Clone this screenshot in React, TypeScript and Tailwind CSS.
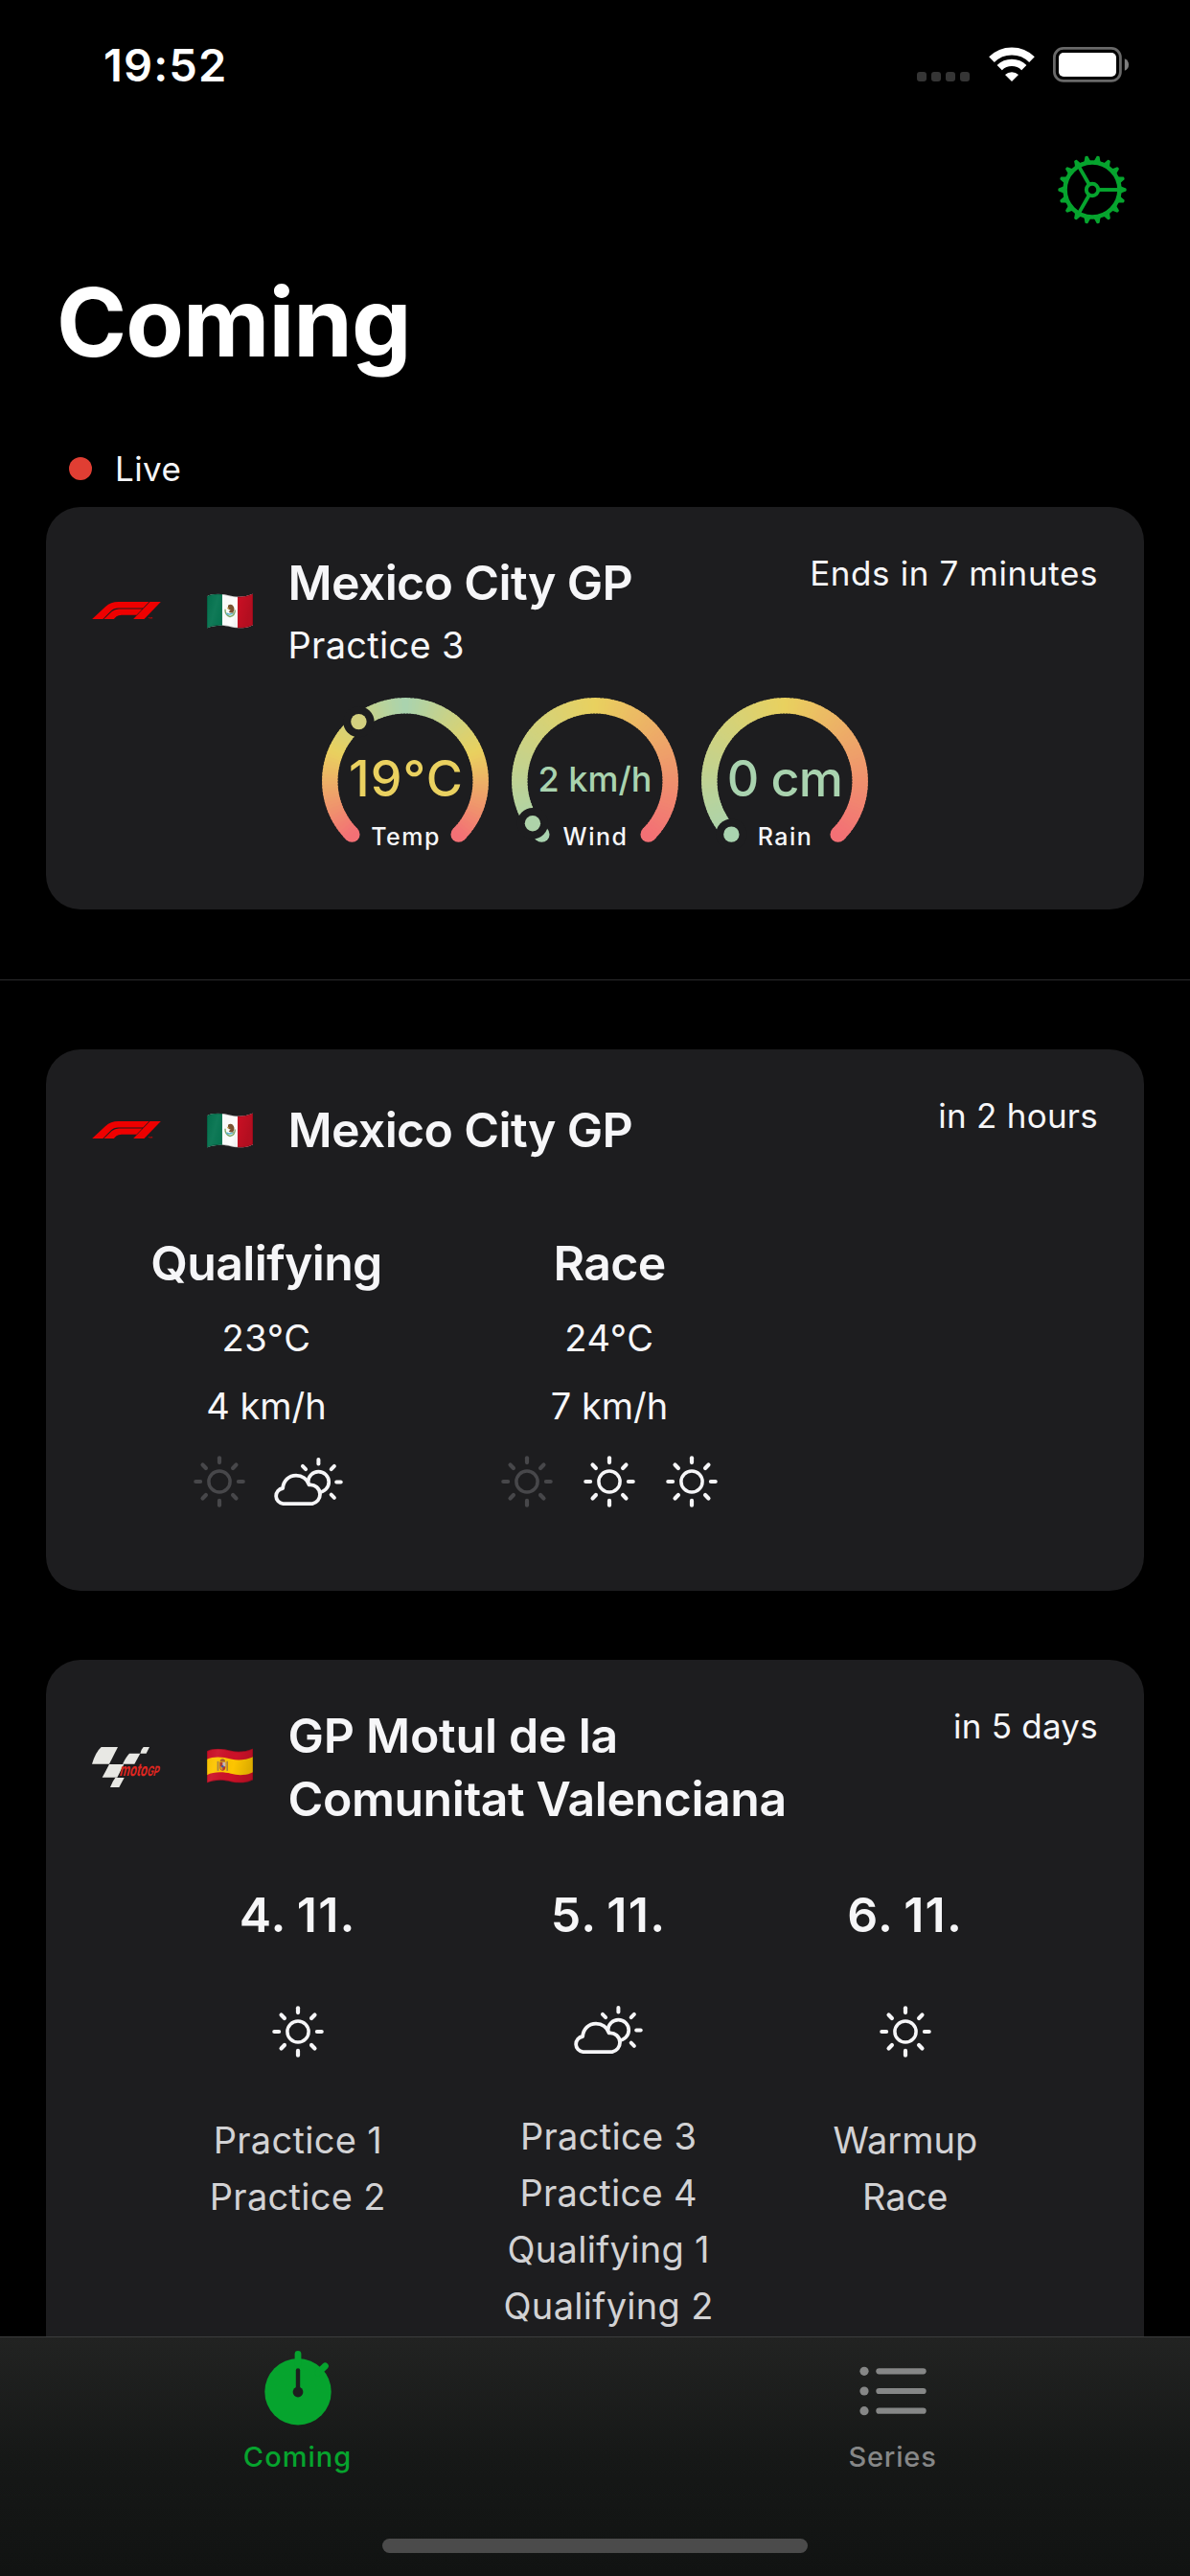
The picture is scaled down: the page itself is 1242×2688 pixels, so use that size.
import React from 'react';

type RGB = [number, number, number];

const RED: RGB = [243, 112, 117];
const YELLOW: RGB = [233, 209, 95];
const GREEN: RGB = [169, 211, 175];

const TEMP_STOPS: RGB[] = [RED, YELLOW, GREEN, YELLOW, RED];
const LEVEL_STOPS: RGB[] = [GREEN, YELLOW, RED];

function colorAt(stops: RGB[], t: number) {
  const pos = Math.min(Math.max(t, 0), 1) * (stops.length - 1);
  const i = Math.min(Math.floor(pos), stops.length - 2);
  const f = pos - i;
  const c = stops[i].map((v, k) => Math.round(v + (stops[i + 1][k] - v) * f));
  return `rgb(${c[0]},${c[1]},${c[2]})`;
}

// The gauge arc sweeps 270 degrees clockwise, starting at the lower left.
function pointAt(t: number) {
  const a = ((135 + 270 * t) * Math.PI) / 180;
  return { x: 87 + 78.7 * Math.cos(a), y: 87 + 78.7 * Math.sin(a) };
}

const SEGMENTS = 108;

function Gauge({
  label,
  value,
  stops,
  at,
  children,
}: {
  label: string;
  value: number;
  stops: RGB[];
  at?: string;
  children: React.ReactNode;
}) {
  const start = pointAt(0);
  const end = pointAt(1);
  const knob = pointAt(value);
  return (
    <div className="relative h-[174px] w-[174px]">
      <svg viewBox="0 0 174 174" className="h-full w-full">
        <circle cx={start.x} cy={start.y} r="8.2" fill={colorAt(stops, 0)} />
        <circle cx={end.x} cy={end.y} r="8.2" fill={colorAt(stops, 1)} />
        {Array.from({ length: SEGMENTS }, (_, i) => {
          const a = pointAt(i / SEGMENTS);
          const b = pointAt(Math.min((i + 1.35) / SEGMENTS, 1));
          return (
            <path
              key={i}
              d={`M${a.x} ${a.y}A78.7 78.7 0 0 1 ${b.x} ${b.y}`}
              fill="none"
              strokeWidth="16.4"
              stroke={colorAt(stops, (i + 0.5) / SEGMENTS)}
            />
          );
        })}
        <circle cx={knob.x} cy={knob.y} r="16.2" fill="#1d1d1f" />
        <circle cx={knob.x} cy={knob.y} r="8.2" fill={at ?? colorAt(stops, value)} />
      </svg>
      <div className="absolute inset-x-0 top-[55px] flex h-[60px] items-center justify-center whitespace-nowrap">
        {children}
      </div>
      <div className="absolute inset-x-0 top-[128.5px] pl-px text-center text-[25px] leading-[32px] font-medium tracking-[1.5px] text-[#f6f6f8]">
        {label}
      </div>
    </div>
  );
}

function F1Logo() {
  return (
    <svg viewBox="0 0 215 54" className="h-[18px] w-[72px] shrink-0" fill="#ee0000">
      <path d="M0 54L42 15Q58 0 82 0H178L159.5 19.5H82Q68 19.5 58 29L33.5 54Z" />
      <path d="M37 54L62 30Q71 22.5 84 22.5H157L139 41H92Q82 41 76 46L68 54Z" />
      <path d="M129 54L181 0H215L163 54Z" />
      <path d="M176 48h5v5h-2v-3h-3zM183 48h6v5h-2v-3h-2v3h-2z" opacity=".7" />
    </svg>
  );
}

function MotoGpLogo() {
  return (
    <svg viewBox="33 54 216 126" className="h-[42px] w-[72px] shrink-0 overflow-visible" fill="#e8e8e4">
      <path d="M33 107Q44 70 62 54H114L87 107Z" />
      <path d="M87 108H133L112 149H65Q75 132 87 108Z" />
      <path d="M129 107Q140 84 150 74H184L166 107Z" />
      <path d="M184 74Q188 60 194 54H213L203 74Z" />
      <path d="M90 180Q98 160 106 150H134L118 180Z" />
      <text
        x="0"
        y="0"
        transform="translate(118 143) skewX(-14)"
        textLength="123"
        lengthAdjust="spacingAndGlyphs"
        className="font-[Inter] text-[54px] font-bold"
        fill="#e0261f"
      >
        moto<tspan className="text-[42px]">GP</tspan>
      </text>
    </svg>
  );
}

const FLAG_OUTLINE = 'M0 9C20 -1 50 1 75 8C100 14 125 10 144 1V99C125 109 100 112 75 105C50 98 20 99 0 109Z';

function FlagShade({ id }: { id: string }) {
  return (
    <>
      <linearGradient id={id} x1="0" x2="1" y1="0" y2="0.2">
        <stop offset="0" stopColor="#000" stopOpacity="0.04" />
        <stop offset="0.25" stopColor="#fff" stopOpacity="0.05" />
        <stop offset="0.65" stopColor="#000" stopOpacity="0" />
        <stop offset="1" stopColor="#000" stopOpacity="0.12" />
      </linearGradient>
      <path d={FLAG_OUTLINE} fill={`url(#${id})`} stroke="#000" strokeOpacity="0.22" strokeWidth="4" />
    </>
  );
}

function MexicoFlag({ id }: { id: string }) {
  return (
    <svg viewBox="0 0 144 110" className="h-[37px] w-[48px] shrink-0">
      <clipPath id={`${id}-clip`}>
        <path d={FLAG_OUTLINE} />
      </clipPath>
      <g clipPath={`url(#${id}-clip)`}>
        <rect width="144" height="110" fill="#fdfdfd" />
        <rect width="48" height="110" fill="#04734f" />
        <rect x="96" width="48" height="110" fill="#cb1024" />
        <path d="M57 50Q56 68 72 73Q88 70 88 52" fill="none" stroke="#7fa86a" strokeWidth="4" />
        <path d="M61 62Q72 70 84 60" fill="none" stroke="#58b5cf" strokeWidth="5" />
        <path d="M66 38Q74 31 81 38Q89 48 83 58Q76 64 68 58L74 52Q64 52 66 38Z" fill="#7b5432" />
        <path d="M62 44l8 2-3 5zM78 62l6-3-1 5z" fill="#c69a4a" />
        <FlagShade id={`${id}-shade`} />
      </g>
    </svg>
  );
}

function SpainFlag() {
  return (
    <svg viewBox="0 0 144 110" className="h-[37px] w-[48px] shrink-0">
      <clipPath id="es-clip">
        <path d={FLAG_OUTLINE} />
      </clipPath>
      <g clipPath="url(#es-clip)">
        <rect width="144" height="110" fill="#cc1128" />
        <path d="M0 35C20 25 50 27 75 34C100 40 125 36 144 27V75C125 85 100 87 75 80C50 73 20 74 0 84Z" fill="#fdc500" />
        <rect x="32" y="41" width="5" height="30" fill="#a9803f" />
        <rect x="61" y="41" width="5" height="30" fill="#a9803f" />
        <path d="M40 44H58V62Q56 71 49 71Q42 71 40 62Z" fill="#b3392f" />
        <path d="M49 44h9v13h-9z" fill="#c9b9b4" />
        <path d="M41 57h8v12q-7-2-8-8z" fill="#d7962a" />
        <circle cx="49" cy="57" r="3.5" fill="#3c5aa8" />
        <path d="M41 42Q41 33 49 33Q57 33 57 42Z" fill="#a8602c" />
        <FlagShade id="es-shade" />
      </g>
    </svg>
  );
}

function Sun({ dim = false }: { dim?: boolean }) {
  return (
    <svg
      viewBox="-27 -27 54 54"
      className={dim ? 'h-[54px] w-[54px] shrink-0 text-[#47474a]' : 'h-[54px] w-[54px] shrink-0 text-[#f6f6f8]'}
      fill="none"
      stroke="currentColor"
      strokeLinecap="round"
    >
      <circle r="11.1" strokeWidth="3.5" />
      {[0, 45, 90, 135, 180, 225, 270, 315].map((a) => (
        <path key={a} d="M0 -19.9V-24.7" strokeWidth="4.2" transform={`rotate(${a})`} />
      ))}
    </svg>
  );
}

function CloudSun() {
  return (
    <svg viewBox="0 0 73 50" className="h-[50px] w-[73px] shrink-0" fill="none" stroke="#f6f6f8" strokeLinecap="round" strokeLinejoin="round">
      <circle cx="46.4" cy="25.4" r="10.8" strokeWidth="3.7" />
      {[-45, 0, 45, 90, 135].map((a) => (
        <path key={a} d="M0 -18.8V-23.3" strokeWidth="4" transform={`translate(46.4 25.4) rotate(${a})`} />
      ))}
      <path
        d="M9.5 48.1H40A9.9 9.9 0 0 0 48 38.3A10 10 0 0 0 36.6 28.4C34.8 22.6 29.4 18.6 23 18.6C15.5 18.6 9.6 24.4 9.2 32A8.1 8.1 0 0 0 9.5 48.1Z"
        fill="#1d1d1f"
        strokeWidth="3.8"
      />
    </svg>
  );
}

function Gear() {
  return (
    <svg viewBox="-36 -36 72 72" className="h-[72px] w-[72px]" fill="none" stroke="#06a42e">
      <circle r="28.4" strokeWidth="4.5" />
      <circle r="6.2" strokeWidth="3.9" />
      {[0, 120, 240].map((a) => (
        <path key={a} d="M7 0H27" strokeWidth="3.9" transform={`rotate(${a})`} />
      ))}
      {Array.from({ length: 18 }, (_, i) => (
        <path
          key={i}
          d="M29 -4.2L31.3 -2.9L35.2 -1.5Q36.2 0 35.2 1.5L31.3 2.9L29 4.2Z"
          fill="#06a42e"
          stroke="none"
          transform={`rotate(${i * 20})`}
        />
      ))}
    </svg>
  );
}

function StatusBar() {
  return (
    <div className="flex h-[132px] shrink-0 items-start justify-between pr-[63px] pl-[108px]">
      <div className="mt-[44px] text-[47px] leading-[48px] font-semibold tracking-[1.1px] text-white">19:52</div>
      <div className="mt-[49px] flex h-[37px]">
        <div className="mt-[26px] flex gap-[5px]">
          {[0, 1, 2, 3].map((i) => (
            <div key={i} className="h-[10px] w-[10px] rounded-[3px] bg-[#353535]" />
          ))}
        </div>
        <svg viewBox="0 0 48 36" className="ml-[20px] h-[36px] w-[48px]" fill="none" stroke="#fff">
          <path d="M3 13.1A29.8 29.8 0 0 1 45 13.1" strokeWidth="8" />
          <path d="M11.2 21.6A18.2 18.2 0 0 1 36.8 21.6" strokeWidth="7.4" />
          <path d="M24 36L17 29A10 10 0 0 1 31 29Z" fill="#fff" stroke="none" />
        </svg>
        <svg viewBox="0 0 80 37" className="ml-[19px] h-[37px] w-[80px]">
          <rect x="1.4" y="1.4" width="69" height="34" rx="9.5" fill="none" stroke="#696969" strokeWidth="2.8" />
          <rect x="6" y="6" width="60" height="25" rx="5" fill="#fff" />
          <path d="M74.8 12.2Q79 14 79 18.5T74.8 24.8Z" fill="#7d7d7d" />
        </svg>
      </div>
    </div>
  );
}

function Title({ children }: { children: React.ReactNode }) {
  return <div className="text-[50px] font-semibold tracking-[-0.65px]">{children}</div>;
}

function DateTitle({ children }: { children: React.ReactNode }) {
  return (
    <div className="text-[50px] leading-[60px] font-semibold tracking-[1.3px] [word-spacing:-3px]">{children}</div>
  );
}

function When({ children }: { children: React.ReactNode }) {
  return <div className="ml-auto self-start text-[35px] leading-[42px] whitespace-nowrap">{children}</div>;
}

function Sessions({ names, className }: { names: string[]; className: string }) {
  return (
    <div className={className}>
      {names.map((n) => (
        <div key={n}>{n}</div>
      ))}
    </div>
  );
}

export default function App() {
  return (
    <div className="flex h-[2688px] w-[1242px] flex-col overflow-hidden bg-black font-[Inter,sans-serif] text-[#f6f6f8]">
      <StatusBar />

      <div className="flex h-[132px] shrink-0 items-center justify-end pr-[66px]">
        <Gear />
      </div>

      <main className="flex min-h-0 flex-1 flex-col overflow-hidden">
        <h1 className="mt-[12px] ml-[59px] shrink-0 text-[99px] leading-[120px] font-bold tracking-[-0.95px] text-white">
          Coming
        </h1>

        <div className="mt-[72px] ml-[72px] flex h-[42px] shrink-0 items-center">
          <div className="h-6 w-6 rounded-full bg-[#e03e33]" />
          <div className="ml-6 text-[35px] leading-[42px] tracking-[0.4px]">Live</div>
        </div>

        <section className="mx-12 mt-[19px] flex h-[420px] shrink-0 flex-col rounded-[36px] bg-[#1d1d1f] px-12 pt-12">
          <header className="flex h-[120px] items-center">
            <F1Logo />
            <div className="ml-12 flex">
              <MexicoFlag id="mx1" />
            </div>
            <div className="ml-[36.5px] leading-[60px]">
              <Title>Mexico City GP</Title>
              <div className="mt-3 text-[38px] leading-[46px] tracking-[0.3px]">Practice 3</div>
            </div>
            <When>
              <span className="tracking-[0.6px]">Ends in 7 minutes</span>
            </When>
          </header>
          <div className="mt-[31px] flex justify-center gap-6">
            <Gauge label="Temp" value={0.3588} stops={TEMP_STOPS} at="#d3d07f">
              <span className="pl-0.5 text-[52px] font-medium tracking-[1.1px] text-[#ead160]">19°C</span>
            </Gauge>
            <Gauge label="Wind" value={0.04} stops={LEVEL_STOPS}>
              <span className="text-[36px] font-medium text-[#a9d3af]">2 km/h</span>
            </Gauge>
            <Gauge label="Rain" value={0} stops={LEVEL_STOPS}>
              <span className="text-[52px] font-medium tracking-[-0.8px] text-[#a9d3af]">0 cm</span>
            </Gauge>
          </div>
        </section>

        <div className="mt-[73px] h-px shrink-0 bg-[#2b2b2d]" />

        <section className="mx-12 mt-[72px] flex h-[565px] shrink-0 flex-col rounded-[36px] bg-[#1d1d1f] px-12 pt-12">
          <header className="flex h-[72px] items-center">
            <F1Logo />
            <div className="ml-12 flex">
              <MexicoFlag id="mx2" />
            </div>
            <div className="ml-[36.5px] leading-[60px]">
              <Title>Mexico City GP</Title>
            </div>
            <When>
              <span className="tracking-[0.25px]">in 2 hours</span>
            </When>
          </header>
          <div className="mt-[73px] -mr-[27px] ml-[3px] grid grid-cols-3 text-center text-[38px] leading-[48px]">
            <div className="flex flex-col items-center">
              <div className="leading-[60px]">
                <Title>Qualifying</Title>
              </div>
              <div className="mt-6 tracking-[0.6px]">23°C</div>
              <div className="mt-[23px]">4 km/h</div>
              <div className="mt-7 flex items-center gap-[30px] pl-1">
                <Sun dim />
                <CloudSun />
              </div>
            </div>
            <div className="flex flex-col items-center">
              <div className="leading-[60px]">
                <Title>Race</Title>
              </div>
              <div className="mt-6 tracking-[0.6px]">24°C</div>
              <div className="mt-[23px]">7 km/h</div>
              <div className="mt-7 flex items-center gap-8">
                <Sun dim />
                <Sun />
                <Sun />
              </div>
            </div>
          </div>
        </section>

        <section className="mx-12 mt-[72px] flex h-[706px] shrink-0 flex-col rounded-t-[36px] bg-[#1d1d1f] px-12 pt-[46px]">
          <header className="flex h-[132px] items-center">
            <MotoGpLogo />
            <div className="ml-12 flex pb-[4px]">
              <SpainFlag />
            </div>
            <div className="ml-[36.5px] text-[50px] leading-[66px] font-semibold">
              <div className="tracking-[-0.25px]">GP Motul de la</div>
              <div className="tracking-[-0.45px]">Comunitat Valenciana</div>
            </div>
            <div className="mt-[2px] ml-auto flex self-start">
              <When>
                <span className="tracking-[0.25px]">in 5 days</span>
              </When>
            </div>
          </header>
          <div className="mt-[58px] mr-[3px] flex justify-evenly text-center text-[38px] leading-[59px] tracking-[0.3px]">
            <div className="flex flex-col items-center">
              <DateTitle>4. 11.</DateTitle>
              <div className="mt-[65px]">
                <Sun />
              </div>
              <Sessions names={['Practice 1', 'Practice 2']} className="mt-[57px] text-[#d2d2d4]" />
            </div>
            <div className="flex flex-col items-center">
              <DateTitle>5. 11.</DateTitle>
              <div className="mt-[65px] h-[50px]">
                <CloudSun />
              </div>
              <Sessions
                names={['Practice 3', 'Practice 4', 'Qualifying 1', 'Qualifying 2']}
                className="mt-[57px] text-[#d2d2d4]"
              />
            </div>
            <div className="flex flex-col items-center pl-[2px]">
              <DateTitle>6. 11.</DateTitle>
              <div className="mt-[65px]">
                <Sun />
              </div>
              <Sessions names={['Warmup', 'Race']} className="mt-[57px] tracking-normal text-[#d2d2d4]" />
            </div>
          </div>
        </section>
      </main>

      <nav className="flex h-[250px] shrink-0 flex-col border-t border-[#3c3d3d] bg-linear-to-b from-[#222322] via-[#161817] via-50% to-[#111312]">
        <div className="flex h-[210px] text-[29px] leading-[36px] font-medium">
          <div className="flex flex-1 flex-col items-center pt-[14px] text-[#06a42e]">
            <svg viewBox="0 0 70 78" className="h-[78px] w-[70px]" fill="none" stroke="currentColor" strokeLinecap="round">
              <circle cx="35" cy="42.7" r="34.7" fill="currentColor" stroke="none" />
              <path d="M35 3.4V14" strokeWidth="6.8" />
              <path d="M56 23L63.3 16" strokeWidth="7" />
              <path d="M35 20.5V42" strokeWidth="4.4" stroke="#1d1f1e" />
              <circle cx="35" cy="43" r="5.4" fill="#1d1f1e" stroke="none" />
            </svg>
            <div className="mt-[15px] tracking-[1px]">Coming</div>
          </div>
          <div className="flex flex-1 flex-col items-center pt-[14px] text-[#868787]">
            <svg viewBox="0 0 70 78" className="h-[78px] w-[70px]" stroke="currentColor" strokeLinecap="round">
              {[21.3, 42, 62.7].map((y) => (
                <g key={y}>
                  <circle cx="5" cy={y} r="4.6" fill="currentColor" stroke="none" />
                  <path d={`M20.4 ${y}H66.6`} strokeWidth="6.2" />
                </g>
              ))}
            </svg>
            <div className="mt-[15px] tracking-[0.8px]">Series</div>
          </div>
        </div>
        <div className="h-[15px] w-[444px] self-center rounded-full bg-[#4b4b4b]" />
      </nav>
    </div>
  );
}
